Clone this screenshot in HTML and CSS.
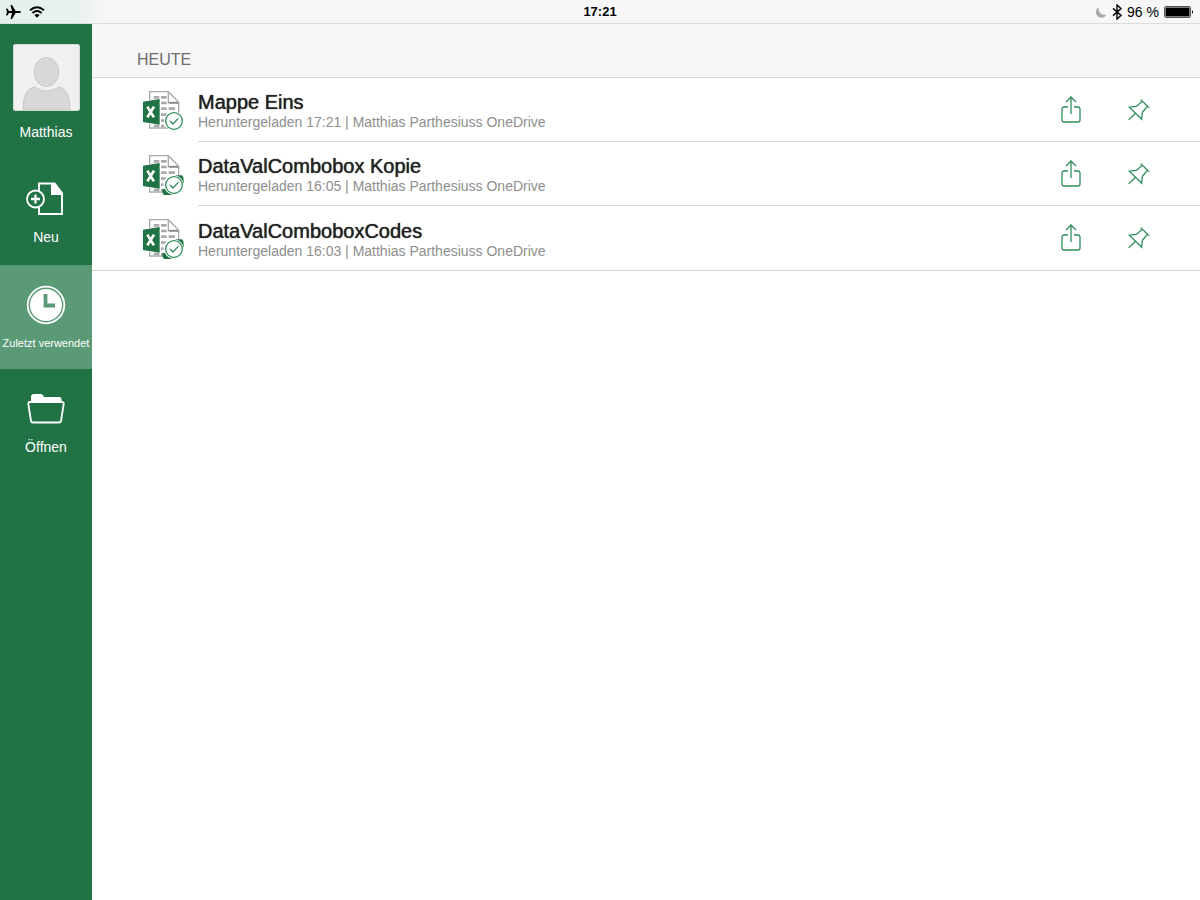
FILE: index.html
```html
<!DOCTYPE html>
<html lang="de">
<head>
  <meta charset="UTF-8"/>
  <meta name="viewport" content="width=device-width, initial-scale=1.0"/>
  <title>Zuletzt verwendet</title>
  <link rel="stylesheet" href="styles.css">
</head>
<body>
  <!-- shared icons -->
  <svg class="sprite" aria-hidden="true">
    <symbol id="file" viewBox="18 15 126 126">
      <path d="M41 46V20H97L128 52V129H41V116" fill="#fff" stroke="#aaa" stroke-width="4"/>
      <path d="M97 20V52H128" fill="none" stroke="#aaa" stroke-width="4"/>
      <path d="M53 33h17v8H53zM75 33h17v8H75zM75 50h17v8H75zM75 67h17v8H75zM98 67h19v8H98zM75 85h17v8H75zM98 85h19v8H98zM75 103h10v8H75zM53 119h17v7H53zM75 119h10v7H75z" fill="#aaa"/>
      <path d="M98 54h29" stroke="#777" stroke-width="4"/>
      <path d="M21 50L71 42V119L21 111Z" fill="#217346"/>
      <path d="M34 65L54 97M54 65L34 97" stroke="#fff" stroke-width="8"/>
    </symbol>
    <symbol id="done" viewBox="18 15 126 126">
      <circle cx="114" cy="108" r="29" fill="#fff"/>
      <circle cx="114" cy="108" r="25" fill="#fff" stroke="#2f8d5c" stroke-width="4"/>
      <path d="M102 108L111 117L127 100" fill="none" stroke="#2f8d5c" stroke-width="4"/>
    </symbol>
    <symbol id="sync" viewBox="18 15 126 126">
      <circle cx="114" cy="108" r="32" fill="#fff"/>
      <path d="M117 79H138Q144 82 143 104Q137 86 117 79ZM112 138H84Q77 132 80 120H87Q93 134 112 138Z" fill="#217346"/>
    </symbol>
    <symbol id="share" viewBox="0 0 20 28">
      <path d="M7 11H3Q1 11 1 13V24Q1 26 3 26H17Q19 26 19 24V13Q19 11 17 11H13M10 18V1M5 6L10 1L15 6" fill="none" stroke="currentColor" stroke-width="1.3"/>
    </symbol>
    <symbol id="pin" viewBox="0 0 22 22">
      <path d="M12.7 .6L21 8.8M14.4 2.3L8.3 7.4L1.3 8.2L13.7 20.3L14.3 13.2L19.4 7.4M7.4 14.3L.8 20.9" fill="none" stroke="currentColor" stroke-width="1.3"/>
    </symbol>
  </svg>

  <header class="statusbar">
    <div class="status-left">
      <svg width="15" height="14" viewBox="0 0 15 14"><path d="M0 3.5H1.3L3 6H6L4.500 0H6L9.600 6H13Q15 6.200 15 7Q15 7.800 13 8H9.600L6 14H4.500L6 8H3L1.300 10.500H0L1 7Z"/></svg>
      <svg width="16" height="12" viewBox="0 0 16 12"><path d="M1 4.3Q8-2 15 4.3M3.4 7Q8 3 12.6 7" fill="none" stroke="#000" stroke-width="1.9"/><path d="M5.4 9Q8 7 10.6 9L8 11.7Z"/></svg>
    </div>
    <time class="clock">17:21</time>
    <div class="status-right">
      <svg width="12" height="12" viewBox="0 0 12 12"><path d="M4 1A5.600 5.600 0 1 0 11.500 8.400A5.800 5.800 0 0 1 4 1Z" fill="#aaa"/></svg>
      <svg width="10" height="16" viewBox="0 0 10 16"><path d="M1 4.400L9 11.400L5 15V1L9 4.600L1 11.600" fill="none" stroke="#000" stroke-width="1.400"/></svg>
      <span>96 %</span>
      <svg width="30" height="12" viewBox="0 0 30 12"><rect x=".5" y=".5" width="26" height="11" rx="1.5" fill="none" stroke="#555"/><rect x="1.5" y="1.5" width="24" height="9" rx=".5"/><path d="M28 4Q30 6 28 8Z"/></svg>
    </div>
  </header>

  <div class="app">
    <nav class="sidebar">
      <button class="profile">
        <svg class="avatar" viewBox="0 0 67 67"><rect width="67" height="67" rx="3" fill="#f0f0f0"/><ellipse cx="33.5" cy="28" rx="12.3" ry="14.5" fill="#d8d8d8" stroke="#c8c8c8"/><path d="M10 66Q10 45 21 43Q33.500 51 46 43Q57 45 57 66Z" fill="#d8d8d8" stroke="#c8c8c8"/><rect x=".5" y=".5" width="66" height="66" rx="3" fill="none" stroke="#cfdcd4"/></svg>
        <span>Matthias</span>
      </button>
      <button class="nav-item">
        <svg viewBox="0 0 40 40"><path d="M13 12V4.500H28.500L36 14V35H13V28" fill="none" stroke="#fff" stroke-width="1.900"/><path d="M25 4H29L36.500 14V16H25Z" fill="#fff"/><circle cx="9.500" cy="20" r="8.500" fill="#217346" stroke="#fff" stroke-width="1.800"/><path d="M9.500 15.500V24.500M5 20H14" stroke="#fff" stroke-width="2.300"/></svg>
        <span>Neu</span>
      </button>
      <button class="nav-item active">
        <svg viewBox="0 0 40 40"><circle cx="20" cy="20" r="18.300" fill="none" stroke="#fff" stroke-width="1.800"/><circle cx="20" cy="20" r="16" fill="#fff"/><path d="M19.500 9V20.500H29" fill="none" stroke="#5a9a77" stroke-width="3.800"/></svg>
        <span class="small">Zuletzt verwendet</span>
      </button>
      <button class="nav-item">
        <svg viewBox="0 0 40 40"><path d="M5 12V8Q5 5 8 5H15Q17 5 18 8H33Q35.500 8 35.500 10V13H5Z" fill="#fff"/><path d="M4 13H36Q38 13 37.700 15L35 32Q34.700 33.500 33 33.500H7Q5.300 33.500 5 32L2.300 15Q2 13 4 13Z" fill="#217346" stroke="#fff" stroke-width="1.800"/></svg>
        <span>Öffnen</span>
      </button>
    </nav>

    <main class="content">
      <h2 class="group">HEUTE</h2>
      <ul class="files">
        <li class="file">
          <svg class="file-icon"><use href="#file"/><use href="#done"/></svg>
          <div class="file-body">
            <div class="file-text">
              <h3>Mappe Eins</h3>
              <p>Heruntergeladen 17:21 | Matthias Parthesiuss OneDrive</p>
            </div>
            <button class="action" aria-label="Teilen"><svg width="20" height="28"><use href="#share"/></svg></button>
            <button class="action" aria-label="Anheften"><svg width="22" height="22"><use href="#pin"/></svg></button>
          </div>
        </li>
        <li class="file">
          <svg class="file-icon"><use href="#file"/><use href="#sync"/><use href="#done"/></svg>
          <div class="file-body">
            <div class="file-text">
              <h3>DataValCombobox Kopie</h3>
              <p>Heruntergeladen 16:05 | Matthias Parthesiuss OneDrive</p>
            </div>
            <button class="action" aria-label="Teilen"><svg width="20" height="28"><use href="#share"/></svg></button>
            <button class="action" aria-label="Anheften"><svg width="22" height="22"><use href="#pin"/></svg></button>
          </div>
        </li>
        <li class="file">
          <svg class="file-icon"><use href="#file"/><use href="#sync"/><use href="#done"/></svg>
          <div class="file-body">
            <div class="file-text">
              <h3>DataValComboboxCodes</h3>
              <p>Heruntergeladen 16:03 | Matthias Parthesiuss OneDrive</p>
            </div>
            <button class="action" aria-label="Teilen"><svg width="20" height="28"><use href="#share"/></svg></button>
            <button class="action" aria-label="Anheften"><svg width="22" height="22"><use href="#pin"/></svg></button>
          </div>
        </li>
      </ul>
    </main>
  </div>
</body>
</html>
```
FILE: styles.css
```css
* { box-sizing:border-box; }
body {
  margin:0;
  min-height:100vh;
  display:flex;
  flex-direction:column;
  background:#fff;
  color:#222;
  font-family:"Liberation Sans",Arial,sans-serif;
  font-size:14px;
}
.sprite { position:absolute; width:0; height:0; }
button {
  padding:0;
  border:none;
  background:none;
  color:inherit;
  font:inherit;
  cursor:pointer;
}
svg { display:block; flex:none; }

.statusbar {
  display:grid;
  grid-template-columns:1fr auto 1fr;
  align-items:center;
  height:24px;
  padding:0 6px;
  background:linear-gradient(90deg,#e5f0ea 0,#e9f2ed 80px,#f7f7f7 108px);
  border-bottom:1px solid #dcdcdc;
  color:#000;
}
.status-left { display:flex; align-items:center; gap:8px; }
.status-right { display:flex; align-items:center; justify-content:flex-end; gap:5px; }
.clock { font-weight:bold; font-size:13px; line-height:16px; padding-top:1px; }

.app { flex:1; display:flex; }
.sidebar {
  flex:none;
  width:92px;
  background:#217346;
  color:#fff;
  display:flex;
  flex-direction:column;
}
.profile {
  height:137px;
  padding-top:20px;
  display:flex;
  flex-direction:column;
  align-items:center;
  gap:13px;
}
.avatar { width:67px; height:67px; }
.nav-item {
  height:104px;
  padding-top:20px;
  display:flex;
  flex-direction:column;
  align-items:center;
  gap:10px;
}
.profile + .nav-item { padding-top:18px; }
.nav-item svg { width:40px; height:40px; }
.nav-item span { line-height:16px; }
.nav-item.active { background:#5a9a77; }
.nav-item .small { font-size:11px; }

.content { flex:1; min-width:0; }
.group {
  margin:0;
  height:54px;
  padding:26px 45px 0;
  background:#f7f7f7;
  border-bottom:1px solid #d8d8d8;
  color:#6d6d6d;
  font-size:16px;
  font-weight:normal;
  line-height:20px;
}
.files { margin:0; padding:0; list-style:none; border-bottom:1px solid #d4d4d4; }
.file { display:flex; padding-left:50px; }
.file-icon { width:42px; height:42px; margin:12px 14px 0 0; }
.file-body {
  flex:1;
  display:flex;
  align-items:center;
  height:64px;
  padding-right:50px;
  border-bottom:1px solid #d8d8d8;
}
.file:last-child .file-body { border-bottom:none; }
.file-text { flex:1; padding-top:3px; }
/* medium weight: regular face with a tight glow */
h3 {
  margin:0;
  font-size:20px;
  font-weight:normal;
  line-height:22px;
  text-shadow:0 0 1px #222;
}
p {
  margin:0;
  color:#8e8e8e;
  font-size:14px;
  line-height:18px;
}
.action { color:#2f8d5c; margin-left:47px; }
```
